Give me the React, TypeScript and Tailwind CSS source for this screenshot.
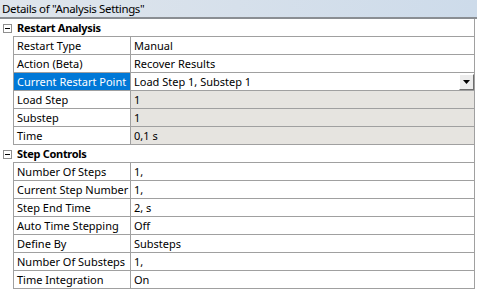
import React from "react";

type Row =
  | { kind: "header"; label: string }
  | { kind: "prop"; label: string; value: string; gray?: boolean; selected?: boolean; dropdown?: boolean };

const rows: Row[] = [
  { kind: "header", label: "Restart Analysis" },
  { kind: "prop", label: "Restart Type", value: "Manual" },
  { kind: "prop", label: "Action (Beta)", value: "Recover Results" },
  { kind: "prop", label: "Current Restart Point", value: "Load Step 1, Substep 1", selected: true, dropdown: true },
  { kind: "prop", label: "Load Step", value: "1", gray: true },
  { kind: "prop", label: "Substep", value: "1", gray: true },
  { kind: "prop", label: "Time", value: "0,1 s", gray: true },
  { kind: "header", label: "Step Controls" },
  { kind: "prop", label: "Number Of Steps", value: "1," },
  { kind: "prop", label: "Current Step Number", value: "1," },
  { kind: "prop", label: "Step End Time", value: "2, s" },
  { kind: "prop", label: "Auto Time Stepping", value: "Off" },
  { kind: "prop", label: "Define By", value: "Substeps" },
  { kind: "prop", label: "Number Of Substeps", value: "1," },
  { kind: "prop", label: "Time Integration", value: "On" },
];

function Expander() {
  return (
    <div className="relative w-[9px] h-[9px] border border-[#8f8f8f] bg-white">
      <div className="absolute left-[1px] top-[3px] w-[5px] h-[1px] bg-black" />
    </div>
  );
}

function DropButton() {
  return (
    <div className="w-[15px] h-[16px] bg-[#ececec] border border-t-white border-l-white border-r-[#6d6d6d] border-b-[#6d6d6d] flex items-center justify-center">
      <svg width="7" height="4" viewBox="0 0 7 4">
        <polygon points="0,0 7,0 3.5,4" fill="#000" />
      </svg>
    </div>
  );
}

export default function App() {
  return (
    <div
      className="w-[477px] h-[291px] bg-white overflow-hidden text-black"
      style={{ fontFamily: '"Noto Sans", "Open Sans", sans-serif' }}
    >
      <div className="h-[19px] border-b-2 border-[#8a8e93] bg-gradient-to-r from-[#dfe5ec] to-[#cddbea] flex items-center pl-[2px]">
        <span className="text-[11.5px] tracking-[-0.35px] leading-none">Details of "Analysis Settings"</span>
      </div>
      <div className="w-[475px] border-r border-[#a0a0a0]">
        {rows.map((r, i) =>
          r.kind === "header" ? (
            <div key={i} className="flex h-[18px]">
              <div className="w-[13px] flex items-center justify-center pl-[1px]">
                <Expander />
              </div>
              <div className="flex-1 border-b border-[#a0a0a0] flex items-center pl-[4px] text-[11px] font-bold tracking-[-0.3px] leading-none">
                {r.label}
              </div>
            </div>
          ) : (
            <div key={i} className="flex h-[18px]">
              <div className="w-[13px]" />
              <div
                className={
                  "w-[118px] border-l border-r border-b border-[#a0a0a0] flex items-center pl-[3px] text-[11px] leading-none whitespace-nowrap " +
                  (r.selected ? "bg-[#0078d7] text-white" : "bg-white")
                }
              >
                {r.label}
              </div>
              <div
                className={
                  "flex-1 border-b border-[#a0a0a0] flex items-center pl-[3px] text-[11px] leading-none " +
                  (r.gray ? "bg-[#e6e4e0]" : "bg-white")
                }
              >
                <span className="flex-1">{r.value}</span>
                {r.dropdown && <DropButton />}
              </div>
            </div>
          )
        )}
      </div>
    </div>
  );
}
